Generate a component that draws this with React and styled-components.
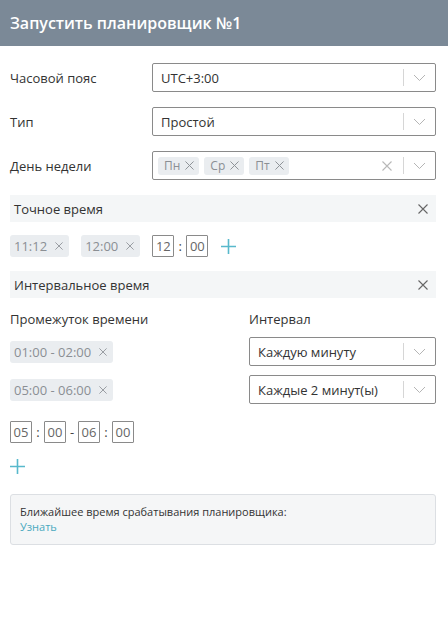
import styled, { createGlobalStyle } from "styled-components";

// 전역 스타일
const GlobalStyle = createGlobalStyle`
  body {
    margin: 0;
    background: #fff;
    font-family: "Open Sans", "Noto Sans", sans-serif;
    color: #333;
  }
  * { box-sizing: border-box; }
`;

const Page = styled.div`
  width: 448px;
  min-height: 633px;
  background: #fff;
`;

// 상단 헤더
const Header = styled.div`
  height: 46px;
  background: #7b8997;
  display: flex;
  align-items: center;
  padding: 0 10px;
  color: #fff;
  font-size: 16px;
  font-weight: 600;
`;

const Body = styled.div`
  padding: 17px 12px 0 10px;
  display: flex;
  flex-direction: column;
`;

const FieldRow = styled.div`
  display: flex;
  align-items: center;
  margin-bottom: 15px;
`;

const Label = styled.div`
  width: 142px;
  font-size: 13px;
  color: #333;
`;

const SelectBox = styled.div`
  flex: 1;
  height: 29px;
  border: 1px solid #8a8a8a;
  border-radius: 2px;
  display: flex;
  align-items: center;
  padding-left: 8px;
  font-size: 13px;
  color: #333;
`;

const SelectValue = styled.div`
  flex: 1;
  display: flex;
  align-items: center;
  gap: 5px;
  margin-left: ${(p) => (p.$chips ? -3 : 0)}px;
`;

const Separator = styled.span`
  width: 1px;
  height: 17px;
  background: #d6d6d6;
`;

const Chevron = styled.span`
  width: 31px;
  display: flex;
  justify-content: center;
  align-items: center;
`;

const ClearIcon = styled.span`
  display: flex;
  margin-right: 11px;
`;

const Chip = styled.span`
  display: inline-flex;
  align-items: center;
  gap: ${(p) => (p.$small ? "5px" : "8px")};
  height: ${(p) => (p.$small ? "18px" : "22px")};
  padding: ${(p) => (p.$small ? "0 5px 0 6px" : "0 6px 0 4px")};
  background: #eaedf0;
  border-radius: 3px;
  color: #8b8f94;
  font-size: ${(p) => (p.$small ? "12px" : "13px")};
`;

const SectionBar = styled.div`
  height: 27px;
  background: #f4f6f7;
  display: flex;
  align-items: center;
  justify-content: space-between;
  padding: 0 8px 0 4px;
  font-size: 13px;
  color: #333;
  margin-bottom: ${(p) => p.$mb || 13}px;
`;

const ChipRow = styled.div`
  display: flex;
  align-items: center;
  gap: 12px;
  margin-bottom: 14px;
`;

const TimeGroup = styled.div`
  display: flex;
  align-items: center;
  margin-top: ${(p) => p.$mt || 0}px;
`;

const TimeBox = styled.span`
  width: 22px;
  height: 22px;
  border: 1px solid #8a8a8a;
  border-radius: 1px;
  display: inline-flex;
  align-items: center;
  justify-content: center;
  font-size: 13px;
  color: #666;
`;

const Sep = styled.span`
  width: 12px;
  text-align: center;
  font-size: 13px;
  color: #444;
`;

const PlusButton = styled.span`
  display: inline-flex;
  margin-left: ${(p) => p.$ml || 0}px;
  margin-top: ${(p) => p.$mt || 0}px;
`;

const Columns = styled.div`
  display: grid;
  grid-template-columns: 239px 1fr;
  row-gap: 9px;
  align-items: center;
`;

const ColLabel = styled.div`
  font-size: 13px;
  color: #333;
`;

const InfoBox = styled.div`
  margin-top: 20px;
  border: 1px solid #dcdfe3;
  border-radius: 3px;
  background: #f5f6f7;
  padding: 9px 9px 10px;
  font-size: 11px;
  line-height: 15px;
  color: #333;
`;

const Link = styled.div`
  color: #4aa9bf;
`;

const XIcon = ({ size = 8, color = "#8e9297", width = 1.1 }) => (
  <svg width={size} height={size} viewBox="0 0 10 10">
    <path d="M0.5 0.5L9.5 9.5M9.5 0.5L0.5 9.5" stroke={color} strokeWidth={width} fill="none" />
  </svg>
);

const DownIcon = () => (
  <svg width="13" height="8" viewBox="0 0 13 8">
    <path d="M1 1L6.5 6.5L12 1" stroke="#b5b5b5" strokeWidth="1" fill="none" />
  </svg>
);

const PlusIcon = () => (
  <svg width="15" height="15" viewBox="0 0 15 15">
    <path d="M7.5 0V15M0 7.5H15" stroke="#58b9cc" strokeWidth="1.6" fill="none" />
  </svg>
);

const Select = ({ children, clearable, chips }) => (
  <SelectBox>
    <SelectValue $chips={chips}>{children}</SelectValue>
    {clearable && (
      <ClearIcon>
        <XIcon size={10} color="#b8b8b8" width={1.1} />
      </ClearIcon>
    )}
    <Separator />
    <Chevron>
      <DownIcon />
    </Chevron>
  </SelectBox>
);

const TimeChip = ({ children }) => (
  <Chip>
    {children}
    <XIcon />
  </Chip>
);

const App = () => {
  return (
    <Page>
      <GlobalStyle />
      <Header>Запустить планировщик №1</Header>
      <Body>
        <FieldRow>
          <Label>Часовой пояс</Label>
          <Select>UTC+3:00</Select>
        </FieldRow>
        <FieldRow>
          <Label>Тип</Label>
          <Select>Простой</Select>
        </FieldRow>
        <FieldRow>
          <Label>День недели</Label>
          <Select clearable chips>
            {["Пн", "Ср", "Пт"].map((d) => (
              <Chip $small key={d}>
                {d}
                <XIcon size={9} />
              </Chip>
            ))}
          </Select>
        </FieldRow>

        <SectionBar>
          Точное время
          <XIcon size={10} color="#666" width={1.1} />
        </SectionBar>
        <ChipRow>
          <TimeChip>11:12</TimeChip>
          <TimeChip>12:00</TimeChip>
          <TimeGroup>
            <TimeBox>12</TimeBox>
            <Sep>:</Sep>
            <TimeBox>00</TimeBox>
          </TimeGroup>
          <PlusButton $ml={1}>
            <PlusIcon />
          </PlusButton>
        </ChipRow>

        <SectionBar $mb={12}>
          Интервальное время
          <XIcon size={10} color="#666" width={1.1} />
        </SectionBar>
        <Columns>
          <ColLabel>Промежуток времени</ColLabel>
          <ColLabel>Интервал</ColLabel>
          <div>
            <TimeChip>01:00 - 02:00</TimeChip>
          </div>
          <Select>Каждую минуту</Select>
          <div>
            <TimeChip>05:00 - 06:00</TimeChip>
          </div>
          <Select>Каждые 2 минут(ы)</Select>
        </Columns>

        <TimeGroup $mt={17}>
          <TimeBox>05</TimeBox>
          <Sep>:</Sep>
          <TimeBox>00</TimeBox>
          <Sep>-</Sep>
          <TimeBox>06</TimeBox>
          <Sep>:</Sep>
          <TimeBox>00</TimeBox>
        </TimeGroup>
        <PlusButton $mt={16}>
          <PlusIcon />
        </PlusButton>

        <InfoBox>
          Ближайшее время срабатывания планировщика:
          <Link>Узнать</Link>
        </InfoBox>
      </Body>
    </Page>
  );
};

export default App;
